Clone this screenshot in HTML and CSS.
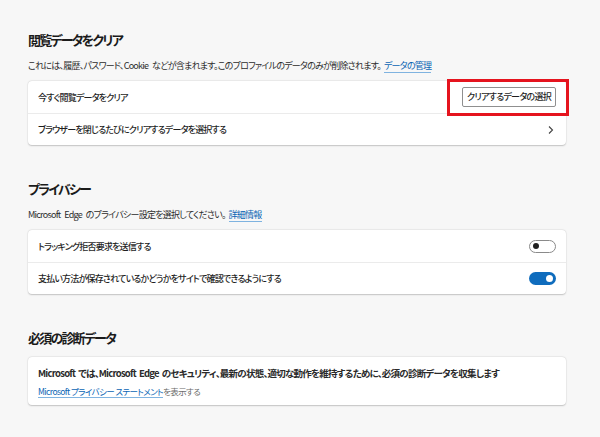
FILE: index.html
```html
<!DOCTYPE html>
<html lang="ja">
<head>
<meta charset="utf-8">
<link rel="stylesheet" href="styles.css">
</head>
<body>
<main class="page">
  <section class="section first">
    <h2 class="title">閲覧データをクリア</h2>
    <p class="desc">これには、履歴、パスワード、Cookie などが含まれます。このプロファイルのデータのみが削除されます。<a class="link" href="#">データの管理</a></p>
    <div class="card">
      <div class="row">
        <span class="label">今すぐ閲覧データをクリア</span>
        <span class="btn-wrap">
          <button class="btn">クリアするデータの選択</button>
          <span class="highlight"></span>
        </span>
      </div>
      <div class="row">
        <span class="label">ブラウザーを閉じるたびにクリアするデータを選択する</span>
        <svg class="chevron" width="8" height="10" viewBox="0 0 8 10"><path d="M2 1.5 L5.5 5 L2 8.5" fill="none" stroke="#444" stroke-width="1.1"/></svg>
      </div>
    </div>
  </section>

  <section class="section">
    <h2 class="title">プライバシー</h2>
    <p class="desc">Microsoft Edge のプライバシー設定を選択してください。<a class="link" href="#">詳細情報</a></p>
    <div class="card">
      <div class="row">
        <span class="label">トラッキング拒否要求を送信する</span>
        <span class="toggle off"><span class="knob"></span></span>
      </div>
      <div class="row">
        <span class="label">支払い方法が保存されているかどうかをサイトで確認できるようにする</span>
        <span class="toggle on"><span class="knob"></span></span>
      </div>
    </div>
  </section>

  <section class="section">
    <h2 class="title">必須の診断データ</h2>
    <div class="card info">
      <p class="info-text">Microsoft では、Microsoft Edge のセキュリティ、最新の状態、適切な動作を維持するために、必須の診断データを収集します</p>
      <p class="info-sub"><a class="link" href="#">Microsoft プライバシー ステートメント</a>を表示する</p>
    </div>
  </section>
</main>
</body>
</html>
```

FILE: styles.css
```css
html, body {
  margin: 0;
  padding: 0;
}
body {
  background: #f7f7f7;
  font-family: "Noto Sans CJK JP", "Noto Sans", sans-serif;
  font-feature-settings: "palt";
  color: #1f1f1f;
  width: 600px;
  height: 437px;
  overflow: hidden;
}
.page {
  padding: 29px 34px 0 28px;
}
.section {
  margin-top: 33px;
}
.section.first {
  margin-top: 0;
}
.title {
  margin: 0 0 7px;
  font-size: 13px;
  line-height: 22px;
  font-weight: 600;
  letter-spacing: -1.8px;
  color: #1b1b1b;
}
.desc {
  margin: 0 0 7px;
  font-size: 9px;
  line-height: 16px;
  letter-spacing: -0.75px;
  word-spacing: 2.5px;
  color: #2b2b2b;
  white-space: nowrap;
}
.link {
  color: #0a64b4;
  text-decoration: none;
  border-bottom: 1px solid #7fb3e0;
  margin-left: 3px;
}
.card {
  background: #fff;
  border-radius: 4px;
  box-shadow: 0 0.5px 1.5px rgba(0,0,0,0.2), 0 0 0 0.5px rgba(0,0,0,0.04);
}
.row {
  height: 32px;
  display: flex;
  align-items: center;
  justify-content: space-between;
  padding: 0 10px;
  font-size: 9px;
  letter-spacing: -0.8px;
  color: #1f1f1f;
  white-space: nowrap;
}
.row + .row {
  border-top: 1px solid #ebebeb;
  height: 31px;
}
.label {
  font-weight: 500;
}
.btn-wrap {
  position: relative;
  display: flex;
}
.btn {
  font-family: inherit;
  font-feature-settings: "palt";
  font-size: 9px;
  letter-spacing: -0.7px;
  font-weight: 500;
  color: #1f1f1f;
  background: #fff;
  border: 1px solid #8f8f8f;
  border-radius: 2px;
  width: 94px;
  height: 20px;
  padding: 0;
  line-height: 18px;
  white-space: nowrap;
}
.highlight {
  position: absolute;
  left: -15px;
  right: -13px;
  top: -8px;
  bottom: -9px;
  border: 3px solid #e5141e;
  pointer-events: none;
}
.chevron {
  margin-right: 1px;
}
.toggle {
  width: 27px;
  height: 13px;
  border-radius: 7px;
  box-sizing: border-box;
  display: flex;
  align-items: center;
  padding: 0 3px;
}
.toggle.off {
  border: 1px solid #8a8a8a;
  background: #fff;
}
.toggle.on {
  background: #0f6cbd;
  justify-content: flex-end;
}
.knob {
  width: 6px;
  height: 6px;
  border-radius: 50%;
}
.toggle.off .knob {
  background: #1f1f1f;
}
.toggle.on .knob {
  background: #fff;
  width: 7px;
  height: 7px;
}
.section .title + .card {
  margin-top: 8px;
}
.info {
  padding: 8px 10px 6px;
}
.info-text {
  margin: 0;
  font-size: 9.5px;
  line-height: 16px;
  font-weight: 600;
  letter-spacing: -0.75px;
  word-spacing: 1.5px;
  color: #2a2a2a;
  white-space: nowrap;
}
.info-sub {
  margin: 2px 0 0;
  font-size: 8.5px;
  line-height: 16px;
  letter-spacing: -0.6px;
  color: #6b6b6b;
}
.info-sub .link {
  margin-left: 0;
}
```
